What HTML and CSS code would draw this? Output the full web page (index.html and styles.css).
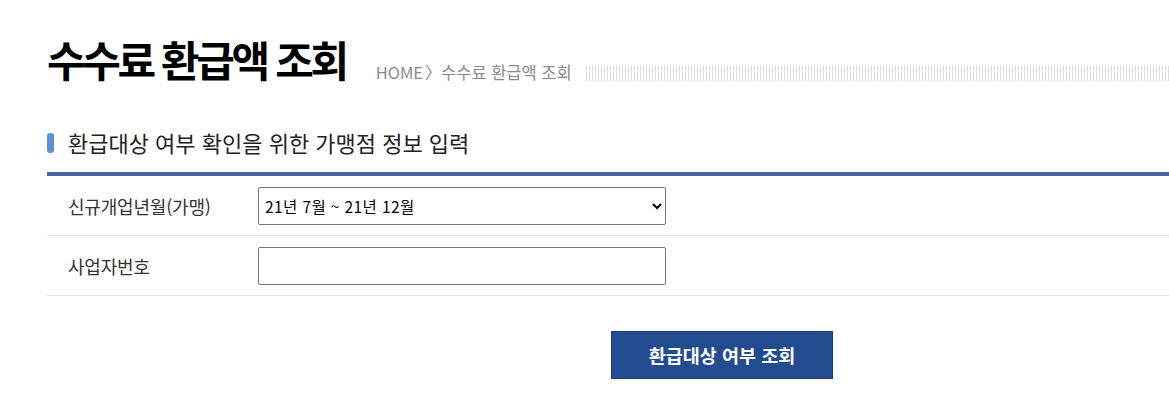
FILE: index.html
```html
<!DOCTYPE html>
<html lang="ko">
<head>
  <meta charset="UTF-8" />
  <meta name="viewport" content="width=device-width, initial-scale=1" />
  <title>수수료 환급액 조회</title>
  <link rel="stylesheet" href="styles.css">
</head>
<body>
  <div class="wrap">
    <header class="page-head">
      <h1>수수료 환급액 조회</h1>
      <div class="location">HOME<span class="arr">〉</span>수수료 환급액 조회</div>
      <div class="stripe"></div>
    </header>

    <section class="refund">
      <h2 class="sub-title">환급대상 여부 확인을 위한 가맹점 정보 입력</h2>

      <form class="form-table">
        <div class="row">
          <label for="openMonth">신규개업년월(가맹)</label>
          <select id="openMonth">
            <option>21년 7월 ~ 21년 12월</option>
            <option>22년 1월 ~ 22년 6월</option>
          </select>
        </div>
        <div class="row">
          <label for="bizNo">사업자번호</label>
          <input type="text" id="bizNo" />
        </div>
        <div class="btn-area">
          <button type="button" class="btn-search">환급대상 여부 조회</button>
        </div>
      </form>
    </section>
  </div>
</body>
</html>
```

FILE: styles.css
```css
body {
  margin: 0;
  font-family: 'Noto Sans CJK KR', 'Noto Sans', sans-serif;
  color: #222;
  background: #fff;
  overflow: hidden;
}
.wrap {
  padding: 0 0 0 47px;
  width: 1160px;
}

/* page title */
.page-head {
  display: flex;
  align-items: flex-end;
  height: 86px;
}
.page-head h1 {
  margin: 0;
  font-size: 42px;
  font-weight: 700;
  color: #000;
  letter-spacing: -3.4px;
  line-height: 1;
  padding-bottom: 6px;
}
.location {
  margin-left: 30px;
  font-size: 16.5px;
  color: #8a8a8a;
  letter-spacing: 0;
  padding-bottom: 2px;
  white-space: nowrap;
}
.location .arr {
  display: inline-block;
  width: 14px;
  margin: 0 2px 0 2px;
  text-align: center;
}
.stripe {
  flex: 1;
  height: 15px;
  margin: 0 0 5px 14px;
  background: repeating-linear-gradient(90deg, #dcdcdc 0, #dcdcdc 1px, transparent 1px, transparent 3px);
}

/* sub title */
.sub-title {
  position: relative;
  margin: 41px 0 0;
  padding-left: 21px;
  font-size: 22px;
  font-weight: 400;
  color: #222;
  line-height: 30px;
  letter-spacing: 0;
}
.sub-title::before {
  content: "";
  position: absolute;
  left: 0;
  top: 6px;
  width: 7px;
  height: 20px;
  border-radius: 3px;
  background: #5d8fda;
}

/* form */
.form-table {
  margin-top: 15px;
  border-top: 4px solid #4767a5;
}
.row {
  display: flex;
  align-items: center;
  height: 59px;
  border-bottom: 1px solid #e2e2e2;
}
.row label {
  width: 190px;
  padding-left: 21px;
  font-size: 18px;
  color: #333;
  letter-spacing: -0.2px;
}
.row select,
.row input {
  box-sizing: border-box;
  width: 408px;
  height: 38px;
  border: 1px solid #767676;
  border-radius: 2px;
  background: #fff;
  font-family: 'Noto Sans CJK KR', sans-serif;
  font-size: 15.5px;
  color: #000;
  padding: 0 2px;
  letter-spacing: 0.4px;
}
.btn-area {
  padding-top: 35px;
  padding-left: 564px;
}
.btn-search {
  width: 222px;
  height: 48px;
  border: 1px solid #1c3d78;
  background: #234b8f;
  color: #fff;
  font-family: 'Noto Sans CJK KR', sans-serif;
  font-size: 18.5px;
  font-weight: 700;
  letter-spacing: 0;
  cursor: pointer;
}
```
